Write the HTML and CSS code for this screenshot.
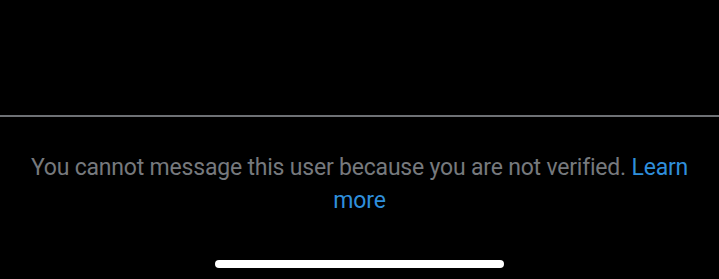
FILE: index.html
```html
<!DOCTYPE html>
<html>
<head>
<meta charset="utf-8">
<link rel="stylesheet" href="styles.css">
</head>
<body>
<div class="screen">
  <div class="top"></div>
  <div class="notice">
    <p class="msg">You cannot message this user because you are not verified. <a class="link" href="#">Learn more</a></p>
  </div>
  <div class="home-bar"><span class="indicator"></span></div>
</div>
</body>
</html>
```
FILE: styles.css
```css
html, body {
  margin: 0;
  padding: 0;
  background: #000;
}
.screen {
  width: 719px;
  height: 279px;
  display: flex;
  flex-direction: column;
  background: #000;
  overflow: hidden;
}
.top {
  height: 115px;
  border-bottom: 2px solid #6e7175;
  flex: none;
}
.notice {
  padding: 34px 20px 0;
  flex: none;
}
.msg {
  margin: 0;
  text-align: center;
  font-family: Roboto, "Noto Sans", sans-serif;
  font-size: 23px;
  line-height: 33px;
  letter-spacing: -0.2px;
  color: #76797d;
}
.link {
  color: #2f8fdc;
  text-decoration: none;
}
.home-bar {
  flex: 1;
  display: flex;
  justify-content: center;
  align-items: flex-start;
  padding-top: 43px;
}
.indicator {
  width: 289px;
  height: 8px;
  border-radius: 4px;
  background: #fff;
}
```
